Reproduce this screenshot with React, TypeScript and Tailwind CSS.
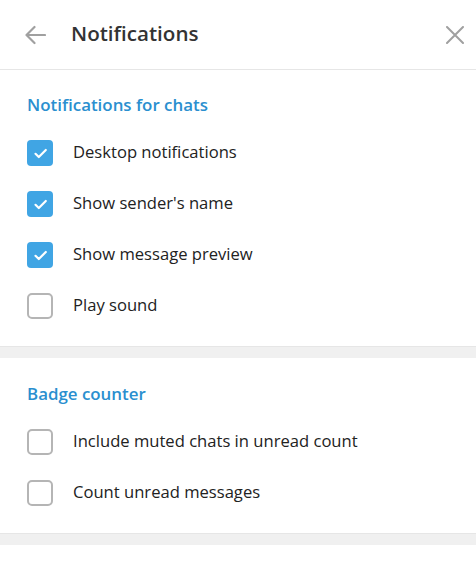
import React from "react";

const font = { fontFamily: '"Open Sans", "Noto Sans", Arial, sans-serif' };

function Check({ checked }: { checked: boolean }) {
  if (checked) {
    return (
      <div className="w-[26px] h-[26px] rounded-[4px] bg-[#40a5e4] shrink-0">
        <svg width="26" height="26" viewBox="0 0 26 26" fill="none">
          <path d="M8.5 13.8 L11.8 17 L18.8 10" stroke="white" strokeWidth="2.2" strokeLinecap="round" strokeLinejoin="round" />
        </svg>
      </div>
    );
  }
  return <div className="w-[26px] h-[26px] rounded-[5px] border-2 border-[#b5b5b5] bg-white shrink-0" />;
}

function Row({ label, checked }: { label: string; checked: boolean }) {
  return (
    <div className="h-[51px] flex items-center pl-[27px]">
      <Check checked={checked} />
      <span className="ml-[20px] text-[16.6px] leading-[24px] text-[#222222] -mt-[1px]">{label}</span>
    </div>
  );
}

function Section({ title, rows, top }: { title: string; rows: [string, boolean][]; top: string }) {
  return (
    <div className={"bg-white pb-[15px] " + top}>
      <div className="h-[24px] flex items-center pl-[27px] text-[16.9px] font-semibold text-[#2a8fcf]">{title}</div>
      <div className="mt-[10px]">
        {rows.map(([l, c]) => (
          <Row key={l} label={l} checked={c} />
        ))}
      </div>
    </div>
  );
}

export default function App() {
  return (
    <div className="w-[476px] h-[566px] bg-white overflow-hidden" style={font}>
      <div className="h-[70px] border-b border-[#e6e6e6] flex items-center">
        <div className="w-[71px] flex items-center pl-[24px]">
          <svg width="22" height="20" viewBox="0 0 22 20" fill="none">
            <path d="M21 10 H2.5 M10.5 2 L2.5 10 L10.5 18" stroke="#a0a0a0" strokeWidth="2.2" strokeLinecap="round" strokeLinejoin="round" />
          </svg>
        </div>
        <div className="flex-1 text-[20.6px] font-semibold text-[#333333] -mt-[2px]">Notifications</div>
        <div className="pr-[12px]">
          <svg width="18" height="18" viewBox="0 0 18 18" fill="none">
            <path d="M1 1 L17 17 M17 1 L1 17" stroke="#a0a0a0" strokeWidth="2" strokeLinecap="round" />
          </svg>
        </div>
      </div>
      <Section
        top="pt-[23px]"
        title="Notifications for chats"
        rows={[
          ["Desktop notifications", true],
          ["Show sender's name", true],
          ["Show message preview", true],
          ["Play sound", false],
        ]}
      />
      <div className="h-[12px] bg-[#f0f0f0] border-t border-[#e6e6e6]" />
      <Section
        top="pt-[24px]"
        title="Badge counter"
        rows={[
          ["Include muted chats in unread count", false],
          ["Count unread messages", false],
        ]}
      />
      <div className="h-[12px] bg-[#f0f0f0] border-t border-[#e6e6e6]" />
    </div>
  );
}
